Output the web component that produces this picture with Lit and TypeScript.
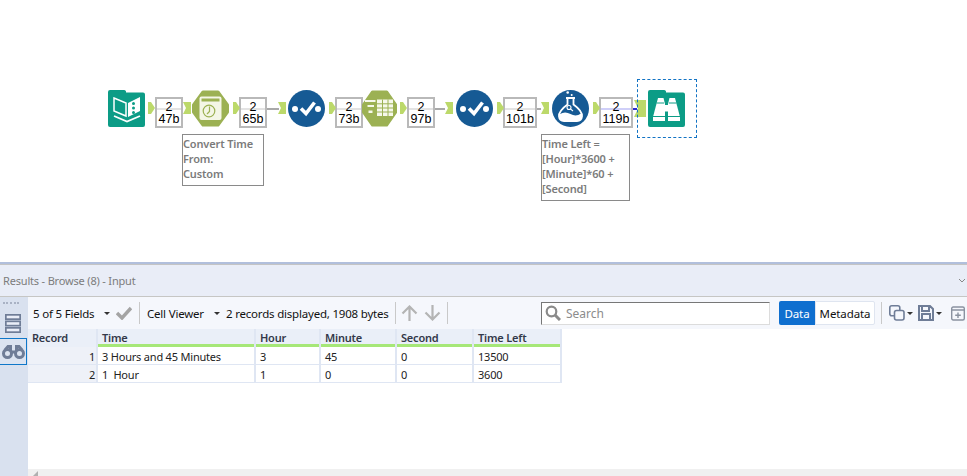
import { LitElement, html, css, svg } from "lit";
import { customElement } from "lit/decorators.js";

const folder = "M2 0H16a2 2 0 0 1 2 2.500H35a2 2 0 0 1 2 2V35a2 2 0 0 1-2 2H2a2 2 0 0 1-2-2V2a2 2 0 0 1 2-2Z";
const hex = "M11 2H26L35.500 15V22L26 35H11L1.500 22V15Z";

const inputIcon = svg`<path d=${folder} fill="#0c9c86"/>
  <path d="M6 8l12 5V26L6 21Z" fill="none" stroke="#fff" stroke-width="1.500"/>
  <path d="M20 13l12-6V21l-12 6Z" fill="#fff"/>
  <circle cx="25.500" cy="13.500" r="1.500" fill="#0c9c86"/><circle cx="25.500" cy="18" r="1.500" fill="#0c9c86"/><circle cx="25.500" cy="22.500" r="1.500" fill="#0c9c86"/>
  <path d="M6 26l13 5.500L32 26" fill="none" stroke="#fff" stroke-width="1.800"/>`;
const timeIcon = svg`<path d=${hex} fill="#9cb153" stroke="#9cb153" stroke-width="3" stroke-linejoin="round"/>
  <rect x="7.500" y="6.500" width="22" height="23.500" rx="2" fill="#f4f6e6"/>
  <path d="M9.500 8.500H27.500V11.500H9.500Z" fill="#9cb153"/>
  <circle cx="17" cy="21" r="5.800" fill="none" stroke="#9cb153" stroke-width="1.200"/>
  <path d="M17.500 16.500V21.500L15 24" fill="none" stroke="#9cb153" stroke-width="1.200"/>`;
const selectIcon = svg`<circle cx="18.500" cy="18.500" r="18.500" fill="#165a94"/>
  <circle cx="7" cy="19" r="3" fill="#fff"/><circle cx="30" cy="19" r="3" fill="#fff"/>
  <path d="M13 18.500L18 23.500L26.500 12.500" fill="none" stroke="#fff" stroke-width="3.600"/>`;
const textColsIcon = svg`<path d=${hex} transform="scale(.95 1)" fill="#9cb153" stroke="#9cb153" stroke-width="3" stroke-linejoin="round"/>
  <path d="M3 10H13.500V12H3ZM5.500 15H12V17H5.500ZM6.500 20.500H10.500V23H6.500Z" fill="#f6f8ea"/>
  <path d="M15 9.500H31V26H15Z" fill="#f6f8ea"/>
  <path d="M15 13.800H31M15 18H31M15 22H31M20.500 9.500V26M26 9.500V26" stroke="#9cb153" stroke-width="1"/>`;
const formulaIcon = svg`<circle cx="18.500" cy="18.500" r="18.500" fill="#165a94"/>
  <path d="M14 8H23M15.500 8V14.500Q6.500 21 7 26.500Q7.500 31 12 31H25Q29.500 31 30 26.500Q30.500 21 21.500 14.500V8" fill="none" stroke="#fff" stroke-width="1.800"/>
  <path d="M8 24Q13 21 18.500 24T29 23.500L29.500 27Q29 31 25 31H12Q8 31 7.500 27Z" fill="#fff"/>
  <circle cx="17" cy="17.500" r="2" fill="none" stroke="#fff" stroke-width="1.100"/>
  <path d="M18.500 19L21 21" stroke="#fff" stroke-width="1.100"/>
  <circle cx="15.700" cy="2.500" r="1.300" fill="#fff"/><circle cx="19.700" cy="5" r="1" fill="#fff"/>`;
const browseIcon = svg`<path d=${folder} fill="#0c9c86"/>
  <path d="M10 8H15.500L17 14V31H5V27Z" fill="#fff"/>
  <path d="M27 8H21.500L20 14V31H32V27Z" fill="#fff"/>
  <path d="M16 15H21V21.500H16Z" fill="#fff"/>
  <path d="M4 26.500H17M20 26.500H33M8.500 13H16M21 13H28.500" stroke="#0c9c86" stroke-width="1"/>`;

const tools = [
  { x: 108, y: 90, s: 37, icon: inputIcon },
  { x: 192, y: 90, s: 37, icon: timeIcon },
  { x: 288, y: 90, s: 37, icon: selectIcon },
  { x: 362, y: 90, s: 35, icon: textColsIcon },
  { x: 456, y: 90, s: 37, icon: selectIcon },
  { x: 552, y: 90, s: 37, icon: formulaIcon },
  { x: 648, y: 90, s: 37, icon: browseIcon },
];
const boxes = [
  { x: 155, w: 28, t: "47b" }, { x: 239, w: 28, t: "65b" }, { x: 335, w: 28, t: "73b" },
  { x: 407, w: 28, t: "97b" }, { x: 503, w: 34, t: "101b" }, { x: 599, w: 34, t: "119b" },
];
const outs: number[] = [148, 233, 329, 400, 497, 593];
const ins: number[] = [183, 278, 445, 541];
const wires = [{ x: 267, w: 12 }, { x: 435, w: 10 }, { x: 537, w: 4 }];

@customElement("app-root")
export class AppRoot extends LitElement {
  static styles = css`
    :host { display: block; width: 967px; height: 476px; overflow: hidden; background: #fff;
      font-family: "Noto Sans", "Open Sans", sans-serif; font-size: 12px; color: #111; }
    .canvas { position: relative; height: 262px; background: #fff; }
    .tool { position: absolute; display: block; }
    .anchor { position: absolute; top: 102px; display: block; }
    .wire { position: absolute; top: 108px; height: 2px; background: #a9a9a9; }
    .box { position: absolute; top: 97px; height: 31px; box-sizing: border-box; border: 2px solid #b9b9b9;
      background: linear-gradient(#fff 0 9px, #e3e3e3 9px 11px, #fff 11px); text-align: center;
      font-family: "Liberation Sans", sans-serif; font-size: 12.500px; line-height: 12px; padding-top: 2px; color: #000; }
    .box.lit { background: linear-gradient(#fff 0 9px, #cfcff8 9px 11px, #fff 11px); }
    .note { position: absolute; box-sizing: border-box; border: 1px solid #8a8a8a; background: #fff; color: #7b7b7b;
      font-size: 11px; font-weight: 600; line-height: 15px; padding: 1px 0 0 0; letter-spacing: -.15px; white-space: pre; top: 134px; }
    .sel { position: absolute; left: 637px; top: 79px; width: 60px; height: 59px; box-sizing: border-box; border: 1px dashed #1273c4; }
    .blue { position: absolute; left: 633px; top: 108px; width: 4px; height: 2px; background: #2b2bd0; }

    .topline { height: 2px; background: #b1bfdc; }
    .greyline { height: 1px; background: #c4c4c4; }
    .title { height: 32px; box-sizing: border-box; background: #e9edf7; border-bottom: 1px solid #c6c6c4; color: #7c7c7c;
      display: flex; align-items: center; justify-content: space-between; padding: 0 2px 0 3px; font-size: 11px; letter-spacing: -.18px; }
    .main { display: flex; height: 179px; }
    .strip { width: 28px; flex: none; background: #d9e1ef; display: flex; flex-direction: column; }
    .grip { height: 0; width: 16px; margin: 5px 0 0 3px; border-top: 2px dotted #a9b2c4; }
    .listicon { margin: 10px 0 5px 5px; display: block; flex: none; }
    .bino { width: 27px; height: 27px; box-sizing: border-box; border: 1px solid #0f77c9; border-left: 0; background: #dce4f1;
      display: flex; align-items: center; justify-content: center; flex: none; }
    .right { flex: 1; min-width: 0; display: flex; flex-direction: column; }
    .toolbar { height: 32px; background: #f5f7fc; display: flex; align-items: center; padding-left: 5px;
      font-size: 11.500px; white-space: nowrap; letter-spacing: -.2px; }
    .toolbar > .t { flex: none; display: block; }
    .caret { width: 0; height: 0; border: 3px solid transparent; border-top: 3px solid #333; border-bottom: 0; margin-top: 1px; flex: none; }
    .sep { width: 1px; height: 22px; background: #c9c9c9; flex: none; }
    .search { margin-left: 93px; width: 229px; height: 23px; box-sizing: border-box; background: #fff; flex: none;
      border: 1px solid #dcdcdc; border-top: 1px solid #777; border-left: 1px solid #777; display: flex; align-items: center;
      gap: 5px; padding-left: 3px; color: #8c8c8c; font-size: 12px; letter-spacing: 0; }
    .seg { display: flex; margin-left: 9px; height: 24px; flex: none; letter-spacing: -.1px; }
    .seg span { display: flex; align-items: center; justify-content: center; box-sizing: border-box; }
    .data { width: 36px; background: #0f6fcf; color: #fff; border-radius: 2px 0 0 2px; }
    .meta { width: 60px; background: #fff; border: 1px solid #dfe5f0; color: #111; border-radius: 0 2px 2px 0; }
    .tablewrap { flex: 1; background: #fff; font-size: 11px; letter-spacing: -.2px; }
    .grid { display: grid; width: 534px; grid-template-columns: 70px 158px 65px 76px 77px 88px; background: #dfe6f3; }
    .cell { box-sizing: border-box; height: 18px; border-right: 2px solid #dfe6f3; border-bottom: 1px solid #dfe6f3; background: #fff;
      padding: 1px 0 0 4px; line-height: 17px; color: #222; white-space: pre; }
    .head { background: #eaeff8; border-bottom: 0; box-shadow: inset 0 -3px #a6e778; font-weight: 600; line-height: 16px; color: #33394a; }
    .head.first { box-shadow: none; }
    .rec { background: #eef1f8; text-align: right; padding-right: 1px; }
    .foot { height: 7px; background: #f0f0f0; padding-left: 5px; flex: none; }
    .foot i { display: block; width: 0; height: 0; border-style: solid; border-width: 0 0 5px 5px; border-color: transparent transparent #b0b0b0; margin-top: 2px; }
  `;

  private anchorOut(x: number) {
    return html`<svg class="anchor" style="left:${x}px" width="7" height="12" viewBox="0 0 7 12"><path d="M0 0H3L7 6L3 12H0Z" fill="#bcd96a" /></svg>`;
  }
  private anchorIn(x: number) {
    return html`<svg class="anchor" style="left:${x}px" width="8" height="12" viewBox="0 0 8 12"><path d="M0 0H8V12H0L3 6Z" fill="#bcd96a" /></svg>`;
  }

  render() {
    const rows = [
      ["1", "3 Hours and 45 Minutes", "3", "45", "0", "13500"],
      ["2", "1  Hour", "1", "0", "0", "3600"],
    ];
    const heads = ["Record", "Time", "Hour", "Minute", "Second", "Time Left"];
    return html`
      <div class="canvas">
        ${wires.map((w) => html`<div class="wire" style="left:${w.x}px;width:${w.w}px"></div>`)}
        ${boxes.map((b, i) => html`<div class="box ${i === 5 ? "lit" : ""}" style="left:${b.x}px;width:${b.w}px">2<br />${b.t}</div>`)}
        ${outs.map((x) => this.anchorOut(x))}
        ${ins.map((x) => this.anchorIn(x))}
        <svg class="anchor" style="left:634px;top:100px" width="12" height="17" viewBox="0 0 12 17"><path d="M0 0H12V17H0L4 8.500Z" fill="#bcd96a" /></svg>
        <div class="blue"></div>
        ${tools.map((t) => html`<svg class="tool" style="left:${t.x}px;top:${t.y}px" width=${t.s} height="37" viewBox="0 0 ${t.s} 37">${t.icon}</svg>`)}
        <div class="sel"></div>
        <div class="note" style="left:182px;width:82px;height:52px">Convert Time
From:
Custom</div>
        <div class="note" style="left:541px;width:89px;height:67px">Time Left =
[Hour]*3600 +
[Minute]*60 +
[Second]</div>
      </div>
      <div class="topline"></div>
      <div class="greyline"></div>
      <div class="title"><span>Results - Browse (8) - Input</span>
        <svg width="6" height="4" viewBox="0 0 6 4"><path d="M0 0L3 3L6 0" fill="none" stroke="#888" /></svg></div>
      <div class="main">
        <div class="strip">
          <div class="grip"></div>
          <svg class="listicon" width="16" height="19" viewBox="0 0 16 19" fill="#e9edf7" stroke="#6f7d97" stroke-width="1.700">
            <rect x=".85" y=".85" width="14.300" height="4.300" /><rect x=".85" y="7.350" width="14.300" height="4.300" /><rect x=".85" y="13.850" width="14.300" height="4.300" />
          </svg>
          <div class="bino">
            <svg width="23" height="14" viewBox="0 0 23 14" fill="none" stroke="#6f7d97" stroke-width="3">
              <circle cx="5.500" cy="8.500" r="4" /><circle cx="17.500" cy="8.500" r="4" />
              <path d="M3 5L6 1.500H8.500V6M20 5L17 1.500H14.500V6M9 7H14" />
            </svg>
          </div>
        </div>
        <div class="right">
          <div class="toolbar">
            <span class="t" style="width:71px">5 of 5 Fields</span><span class="caret"></span>
            <svg style="margin:0 7px 0 6px;flex:none" width="16" height="14" viewBox="0 0 16 14"><path d="M1 7L6 12L15 2" fill="none" stroke="#a4a4a4" stroke-width="3.400" /></svg>
            <span class="sep"></span>
            <span class="t" style="margin-left:7px;width:67px">Cell Viewer</span><span class="caret"></span>
            <span class="t" style="margin-left:6px;width:162px">2 records displayed, 1908 bytes</span>
            <span class="sep" style="margin-left:7px"></span>
            <svg style="margin-left:5px;flex:none" width="17" height="16" viewBox="0 0 17 16"><path d="M8.500 16V2M1.500 8.500L8.500 1.500L15.500 8.500" fill="none" stroke="#b4b4b4" stroke-width="2.200" /></svg>
            <svg style="margin-left:6px;flex:none" width="17" height="16" viewBox="0 0 17 16"><path d="M8.500 0V14M1.500 7.500L8.500 14.500L15.500 7.500" fill="none" stroke="#b4b4b4" stroke-width="2.200" /></svg>
            <span class="sep" style="margin-left:6px"></span>
            <div class="search">
              <svg style="flex:none" width="16" height="16" viewBox="0 0 16 16" fill="none" stroke="#8a8a8a"><circle cx="6.500" cy="6.500" r="4.800" stroke-width="2.200" /><path d="M10 10L15 15" stroke-width="3" /></svg>
              <span>Search</span>
            </div>
            <div class="seg"><span class="data">Data</span><span class="meta">Metadata</span></div>
            <span class="sep" style="margin-left:6px"></span>
            <svg style="margin-left:7px;flex:none" width="16" height="16" viewBox="0 0 16 16" fill="none" stroke="#6f7d97" stroke-width="1.600"><rect x=".8" y=".8" width="10" height="10" rx="2" /><rect x="5.500" y="5.500" width="9.500" height="9.500" rx="2" fill="#f5f7fc" /></svg>
            <span class="caret" style="margin-left:2px"></span>
            <svg style="margin-left:5px;flex:none" width="16" height="16" viewBox="0 0 16 16" fill="none" stroke="#6f7d97" stroke-width="2"><path d="M1 1H12L15 4V15H1ZM4 1V6H11V1M4 15V9H12V15" /></svg>
            <span class="caret" style="margin-left:2px"></span>
            <svg style="margin-left:9px;flex:none" width="14" height="15" viewBox="0 0 14 15" fill="none" stroke="#8a92a0" stroke-width="1.400"><rect x=".7" y="1" width="12.600" height="13" rx="1.500" /><path d="M1 4H13M7 6.500V12M4.200 9.200H9.800" /></svg>
            <span class="caret" style="margin-left:2px"></span>
          </div>
          <div class="tablewrap">
            <div class="grid">
              ${heads.map((h, i) => html`<div class="head cell ${i === 0 ? "first" : ""}">${h}</div>`)}
              ${rows.map((r) => r.map((c, i) => html`<div class="cell ${i === 0 ? "rec" : ""}">${c}</div>`))}
            </div>
          </div>
          <div class="foot"><i></i></div>
        </div>
      </div>
    `;
  }
}
